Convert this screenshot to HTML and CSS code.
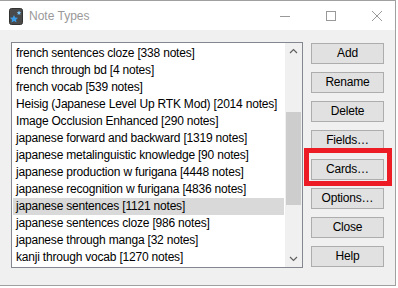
FILE: index.html
```html
<!DOCTYPE html>
<html>
<head>
<meta charset="utf-8">
<link rel="stylesheet" href="styles.css">
</head>
<body>
<div class="window">
  <div class="titlebar">
    <svg class="app-icon" width="14" height="17" viewBox="0 0 14 17">
      <rect x="0.5" y="0.5" width="13" height="16" rx="2" fill="#4a4a4a" stroke="#333" stroke-width="1"/>
      <polygon points="5,7 6.2,9.5 9,9.8 7,11.7 7.5,14.5 5,13.1 2.5,14.5 3,11.7 1,9.8 3.8,9.5" fill="#3b9ce8"/>
      <polygon points="10,2.5 10.7,4 12.3,4.2 11.1,5.3 11.4,6.9 10,6.1 8.6,6.9 8.9,5.3 7.7,4.2 9.3,4" fill="#7cc3f5"/>
    </svg>
    <span class="title">Note Types</span>
    <div class="controls">
      <svg class="ctl" width="46" height="30" viewBox="0 0 46 30"><line x1="18" y1="15.5" x2="28" y2="15.5" stroke="#999" stroke-width="1"/></svg>
      <svg class="ctl" width="46" height="30" viewBox="0 0 46 30"><rect x="18.5" y="10.5" width="9" height="9" fill="none" stroke="#999" stroke-width="1"/></svg>
      <svg class="ctl" width="46" height="30" viewBox="0 0 46 30"><path d="M18 10 L28 20 M28 10 L18 20" stroke="#999" stroke-width="1"/></svg>
    </div>
  </div>
  <div class="body">
    <div class="listbox">
      <ul class="items">
        <li>french sentences cloze [338 notes]</li>
        <li>french through bd [4 notes]</li>
        <li>french vocab [539 notes]</li>
        <li>Heisig (Japanese Level Up RTK Mod) [2014 notes]</li>
        <li>Image Occlusion Enhanced [290 notes]</li>
        <li>japanese forward and backward [1319 notes]</li>
        <li>japanese metalinguistic knowledge [90 notes]</li>
        <li>japanese production w furigana [4448 notes]</li>
        <li>japanese recognition w furigana [4836 notes]</li>
        <li class="selected">japanese sentences [1121 notes]</li>
        <li>japanese sentences cloze [986 notes]</li>
        <li>japanese through manga [32 notes]</li>
        <li>kanji through vocab [1270 notes]</li>
      </ul>
      <div class="scrollbar">
        <div class="arrow">
          <svg width="17" height="17" viewBox="0 0 17 17"><path d="M5 10 L8.5 6.5 L12 10" fill="none" stroke="#606060" stroke-width="1.2"/></svg>
        </div>
        <div class="track">
          <div class="thumb"></div>
        </div>
        <div class="arrow">
          <svg width="17" height="17" viewBox="0 0 17 17"><path d="M5 7 L8.5 10.5 L12 7" fill="none" stroke="#606060" stroke-width="1.2"/></svg>
        </div>
      </div>
    </div>
    <div class="buttons">
      <button class="btn">Add</button>
      <button class="btn">Rename</button>
      <button class="btn">Delete</button>
      <button class="btn">Fields…</button>
      <div class="highlight-wrap">
        <button class="btn">Cards…</button>
        <div class="redbox"></div>
      </div>
      <button class="btn">Options…</button>
      <button class="btn">Close</button>
      <button class="btn">Help</button>
    </div>
  </div>
</div>
</body>
</html>
```
FILE: styles.css
```css
html, body {
  margin: 0;
  padding: 0;
  background: #ffffff;
}
body {
  width: 398px;
  height: 288px;
  overflow: hidden;
  font-family: "Liberation Sans", Arial, sans-serif;
  font-size: 12px;
  letter-spacing: -0.2px;
  color: #000;
}
.window {
  width: 395px;
  height: 284px;
  border-top: 1px solid #a0a0a0;
  border-right: 1px solid #a0a0a0;
  border-bottom: 1px solid #a0a0a0;
  background: #f0f0f0;
  display: flex;
  flex-direction: column;
}
.titlebar {
  height: 29px;
  background: #ffffff;
  display: flex;
  align-items: center;
  padding-left: 9px;
}
.app-icon {
  margin-top: 1px;
}
.title {
  margin-left: 6px;
  color: #999999;
  font-size: 12px;
  letter-spacing: 0;
  margin-top: 1px;
}
.controls {
  margin-left: auto;
  display: flex;
  margin-right: -5px;
}
.ctl {
  display: block;
}
.body {
  flex: 1;
  display: flex;
  padding: 12px 0 0 11px;
  gap: 8px;
}
.listbox {
  width: 290px;
  height: 224px;
  border: 1px solid #828790;
  background: #ffffff;
  display: flex;
}
.items {
  list-style: none;
  margin: 0;
  padding: 2px 1px 0 1px;
  flex: 1;
}
.items li {
  height: 17px;
  line-height: 17px;
  padding-left: 3px;
  white-space: nowrap;
  overflow: hidden;
}
.items li.selected {
  background: #d9d9d9;
}
.scrollbar {
  width: 17px;
  background: #f0f0f0;
  display: flex;
  flex-direction: column;
}
.arrow {
  height: 17px;
}
.arrow svg {
  display: block;
}
.track {
  flex: 1;
  padding-top: 52px;
}
.thumb {
  margin: 0 1px;
  height: 93px;
  background: #cdcdcd;
}
.buttons {
  display: flex;
  flex-direction: column;
  gap: 8px;
  padding-top: 1px;
}
.btn {
  width: 73px;
  height: 21px;
  background: #e1e1e1;
  border: 1px solid #adadad;
  font-family: inherit;
  font-size: 12px;
  letter-spacing: -0.2px;
  color: #000;
  padding: 0;
  margin: 0;
  line-height: 19px;
}
.highlight-wrap {
  position: relative;
  height: 21px;
}
.redbox {
  position: absolute;
  left: -7px;
  top: -11px;
  width: 78px;
  height: 28px;
  border: 5px solid #ed1c24;
}
```
